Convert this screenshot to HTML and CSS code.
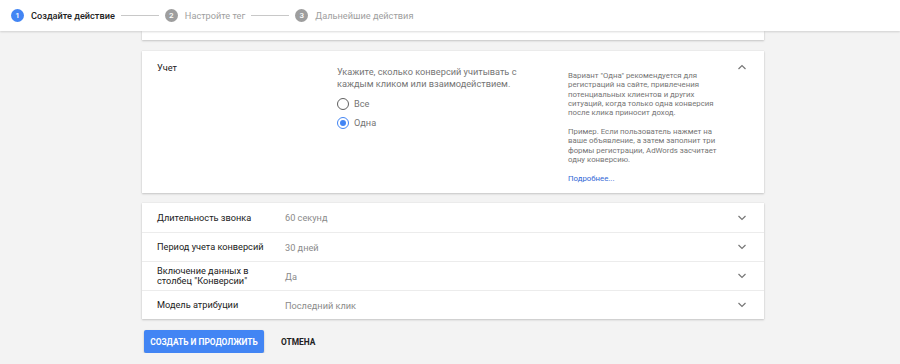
FILE: index.html
```html
<!DOCTYPE html>
<html lang="ru">
<head>
    <meta charset="UTF-8">
    <title>Создайте действие</title>
    <link rel="stylesheet" href="styles.css">
</head>
<body>
    <div class="stepper">
        <div class="step active"><span class="step-num">1</span>Создайте действие</div>
        <div class="step-line"></div>
        <div class="step"><span class="step-num">2</span>Настройте тег</div>
        <div class="step-line"></div>
        <div class="step"><span class="step-num">3</span>Дальнейшие действия</div>
    </div>

    <div class="page">
        <div class="card card-stub"></div>

        <div class="card panel">
            <div class="panel-label">Учет</div>
            <div class="panel-body">
                <div class="panel-desc">Укажите, сколько конверсий учитывать с<br>каждым кликом или взаимодействием.</div>
                <label class="radio"><span class="radio-dot"></span>Все</label>
                <label class="radio checked"><span class="radio-dot"></span>Одна</label>
            </div>
            <div class="panel-help">
                <p>Вариант "Одна" рекомендуется для<br>регистраций на сайте, привлечения<br>потенциальных клиентов и других<br>ситуаций, когда только одна конверсия<br>после клика приносит доход.</p>
                <p>Пример. Если пользователь нажмет на<br>ваше объявление, а затем заполнит три<br>формы регистрации, AdWords засчитает<br>одну конверсию.</p>
                <a class="help-link" href="#">Подробнее...</a>
            </div>
            <svg class="chevron" width="10" height="6" viewBox="0 0 10 6"><path d="M1.5 5 L5 1.5 L8.5 5" fill="none" stroke="#777" stroke-width="1.2"/></svg>
        </div>

        <div class="card list">
            <div class="row">
                <div class="row-label">Длительность звонка</div>
                <div class="row-value">60 секунд</div>
                <svg class="chevron" width="10" height="6" viewBox="0 0 10 6"><path d="M1.5 1 L5 4.5 L8.5 1" fill="none" stroke="#777" stroke-width="1.2"/></svg>
            </div>
            <div class="row">
                <div class="row-label">Период учета конверсий</div>
                <div class="row-value">30 дней</div>
                <svg class="chevron" width="10" height="6" viewBox="0 0 10 6"><path d="M1.5 1 L5 4.5 L8.5 1" fill="none" stroke="#777" stroke-width="1.2"/></svg>
            </div>
            <div class="row">
                <div class="row-label">Включение данных в<br>столбец "Конверсии"</div>
                <div class="row-value">Да</div>
                <svg class="chevron" width="10" height="6" viewBox="0 0 10 6"><path d="M1.5 1 L5 4.5 L8.5 1" fill="none" stroke="#777" stroke-width="1.2"/></svg>
            </div>
            <div class="row">
                <div class="row-label">Модель атрибуции</div>
                <div class="row-value">Последний клик</div>
                <svg class="chevron" width="10" height="6" viewBox="0 0 10 6"><path d="M1.5 1 L5 4.5 L8.5 1" fill="none" stroke="#777" stroke-width="1.2"/></svg>
            </div>
        </div>

        <div class="actions">
            <button class="btn-primary">Создать и продолжить</button>
            <button class="btn-flat">Отмена</button>
        </div>
    </div>
</body>
</html>
```

FILE: styles.css
```css
body {
    margin: 0;
    font-family: Roboto, "Liberation Sans", sans-serif;
    background: #f3f3f3;
    color: #333;
    font-size: 9.2px;
}
.stepper {
    display: flex;
    align-items: center;
    height: 31px;
    padding-left: 11px;
    background: white;
    box-shadow: 0 1px 2px rgba(0,0,0,0.15);
    position: relative;
    z-index: 1;
}
.step {
    display: flex;
    align-items: center;
    font-size: 9.2px;
    color: #9e9e9e;
}
.step.active {
    color: #212121;
    font-weight: 500;
}
.step-num {
    width: 13px;
    height: 13px;
    border-radius: 50%;
    background: #9e9e9e;
    color: white;
    font-size: 8px;
    font-weight: 500;
    display: flex;
    align-items: center;
    justify-content: center;
    margin-right: 7px;
}
.step.active .step-num {
    background: #4285f4;
}
.step-line {
    width: 38px;
    height: 1px;
    background: #c8c8c8;
    margin: 0 6px;
}
.page {
    padding-left: 142px;
}
.card {
    width: 622px;
    background: white;
    box-shadow: 0 1px 2px rgba(0,0,0,0.18), 0 0 1px rgba(0,0,0,0.12);
}
.card-stub {
    height: 9px;
}
.panel {
    margin-top: 11px;
    height: 142px;
    display: flex;
    position: relative;
}
.panel-label {
    width: 180px;
    padding: 10px 0 0 15px;
    line-height: 13px;
    color: #212121;
}
.panel-body {
    width: 200px;
    padding-top: 15px;
}
.panel-desc {
    color: #757575;
    line-height: 11.7px;
    margin-bottom: 5px;
    white-space: nowrap;
}
.radio {
    display: flex;
    align-items: center;
    height: 19px;
    color: #757575;
}
.radio-dot {
    width: 10px;
    height: 10px;
    border: 1.5px solid #5f5f5f;
    border-radius: 50%;
    margin-right: 5px;
    position: relative;
}
.radio.checked .radio-dot {
    border-color: #4285f4;
}
.radio.checked .radio-dot::after {
    content: "";
    position: absolute;
    left: 2px;
    top: 2px;
    width: 6px;
    height: 6px;
    border-radius: 50%;
    background: #4285f4;
}
.panel-help {
    margin-left: 31px;
    padding-top: 20px;
    width: 160px;
    font-size: 7.8px;
    line-height: 9.35px;
    color: #757575;
    white-space: nowrap;
}
.panel-help p {
    margin: 0 0 9.35px;
}
.help-link {
    display: block;
    margin-top: 10px;
    color: #3367d6;
    text-decoration: none;
}
.panel .chevron {
    position: absolute;
    right: 17px;
    top: 13px;
}
.list {
    margin-top: 10px;
}
.row {
    display: flex;
    align-items: center;
    height: 29px;
    padding-left: 15px;
    border-top: 1px solid #ececec;
    box-sizing: border-box;
}
.row:first-child {
    border-top: none;
}
.row-label {
    width: 128px;
    line-height: 10px;
    color: #212121;
}
.row-value {
    flex: 1;
    color: #8a8a8a;
}
.row .chevron {
    margin-right: 17px;
}
.actions {
    display: flex;
    align-items: center;
    margin-top: 11px;
    padding-left: 2px;
}
.btn-primary {
    height: 23px;
    width: 120px;
    padding: 0;
    border: none;
    border-radius: 2px;
    background: #4285f4;
    color: white;
    font-family: inherit;
    font-size: 8.4px;
    font-weight: 700;
    text-transform: uppercase;
    white-space: nowrap;
    box-shadow: 0 1px 2px rgba(0,0,0,0.25);
}
.btn-flat {
    margin-left: 11px;
    border: none;
    background: none;
    color: #212121;
    font-family: inherit;
    font-size: 8.4px;
    font-weight: 700;
    text-transform: uppercase;
}
```
